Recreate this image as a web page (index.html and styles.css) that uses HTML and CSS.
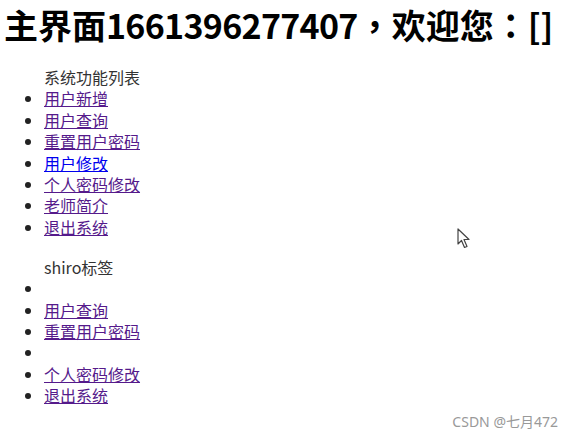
FILE: index.html
```html
<!DOCTYPE html>
<html lang="zh-CN">
<head>
  <meta charset="UTF-8" />
  <title>主界面</title>
  <link rel="stylesheet" href="styles.css">
</head>
<body>
  <h1 class="title">主界面<span class="num">1661396277407</span><span class="punct" lang="zh-TW">，</span>欢迎您<span class="punct" lang="zh-TW">：</span>[]</h1>

  <ul class="menu">
    <span class="menu-head">系统功能列表</span>
    <li><a href="#" class="visited">用户新增</a></li>
    <li><a href="#" class="visited">用户查询</a></li>
    <li><a href="#" class="visited">重置用户密码</a></li>
    <li><a href="#">用户修改</a></li>
    <li><a href="#" class="visited">个人密码修改</a></li>
    <li><a href="#" class="visited">老师简介</a></li>
    <li><a href="#" class="visited">退出系统</a></li>
  </ul>

  <ul class="menu">
    <span class="menu-head">shiro标签</span>
    <li></li>
    <li><a href="#" class="visited">用户查询</a></li>
    <li><a href="#" class="visited">重置用户密码</a></li>
    <li></li>
    <li><a href="#" class="visited">个人密码修改</a></li>
    <li><a href="#" class="visited">退出系统</a></li>
  </ul>

  <svg class="cursor" width="14" height="22" viewBox="0 0 14 22">
    <path d="M1 1 L1 16 L4.5 12.5 L7.5 19.5 L10 18.5 L7 11.5 L12 11.5 Z" fill="#fff" stroke="#444" stroke-width="1.2" stroke-linejoin="round"/>
  </svg>

  <div class="watermark">CSDN @七月472</div>
</body>
</html>
```

FILE: styles.css
```css
body {
  margin: 0 4px;
  font-family: "Noto Sans CJK SC", "Liberation Sans", sans-serif;
  font-size: 16px;
  color: #222;
  background: #fff;
  position: relative;
  height: 438px;
}

.title {
  font-size: 34px;
  font-weight: bold;
  line-height: 40px;
  margin: 5px 0 0;
  color: #000;
  white-space: nowrap;
}

.title .num {
  letter-spacing: -0.7px;
}

/* centred full-width punctuation, like the original font */
.title .punct {
  font-family: "Noto Sans CJK TC", sans-serif;
}

.menu {
  margin: 22px 0 0;
  padding-left: 40px;
  line-height: 21.4px;
}

.menu + .menu {
  margin-top: 18.6px;
}

.menu-head {
  display: block;
  color: #333;
}

.menu li {
  height: 21.4px;
}

.menu a {
  color: #0000ee;
}

.menu a.visited {
  color: #551a8b;
}

.cursor {
  position: absolute;
  left: 453px;
  top: 228px;
}

.watermark {
  position: absolute;
  right: 13px;
  top: 411px;
  font-size: 14px;
  color: #999;
  font-family: "Noto Sans", "Noto Sans CJK SC", sans-serif;
}
```
